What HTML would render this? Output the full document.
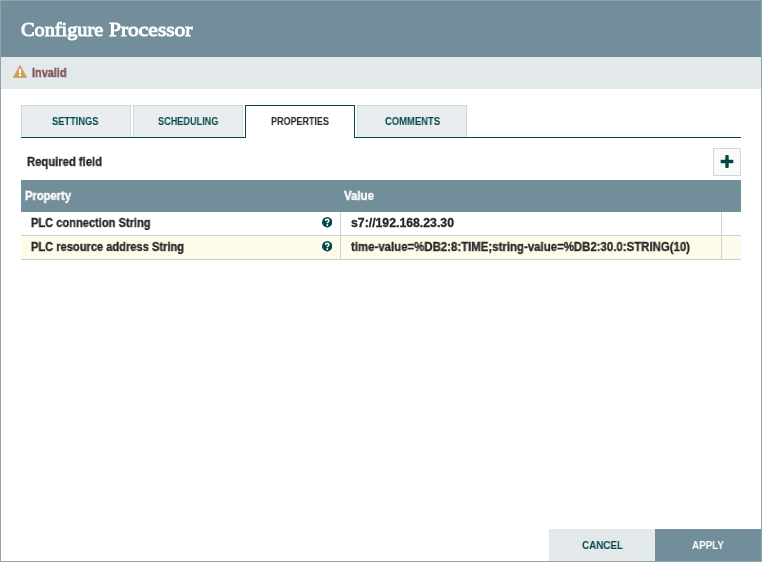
<!DOCTYPE html>
<html><head><meta charset="utf-8">
<style>
*{box-sizing:border-box;margin:0;padding:0}
html,body{width:762px;height:562px;overflow:hidden;background:#90a4ae;font-family:"Liberation Sans",sans-serif;}
#dlg{position:absolute;left:1px;top:1px;width:760px;height:560px;background:#fff;overflow:hidden}
#hdr{position:absolute;left:0;top:0;width:760px;height:56px;background:#728e9b;}
.t{position:absolute;white-space:nowrap;transform-origin:0 50%;display:block;will-change:transform;-webkit-text-stroke:0.3px}
#title,#title2{left:20px;top:17.9px;font-family:"Liberation Serif",serif;font-weight:normal;-webkit-text-stroke:0.9px #fff;font-size:18.5px;color:#fff;line-height:22px;transform:scaleX(1.096)}
#title2{left:108.4px;transform:scaleX(1.161)}
#status{position:absolute;left:0;top:56px;width:760px;height:32px;background:#e3e8eb;}
#status .t{left:30.5px;top:9px;font-size:12px;font-weight:bold;color:#7a4f4f;line-height:14px;transform:scaleX(0.908)}
#warn{position:absolute;left:12px;top:7.8px;}
.tab{position:absolute;top:104px;height:32px;width:110px;background:#e9edef;border:1px solid #ccdadb;border-bottom:none;font-size:10px;font-weight:bold;color:#004849;line-height:32px;}
.tab.sel{background:#fff;border-color:#004849;color:#262626;height:33px;top:104px;}
.tab .t{top:0;-webkit-text-stroke:0}
#tabline{position:absolute;left:20px;top:136px;width:720px;height:1px;background:#004849;}
#req{left:26px;top:154px;font-size:12px;font-weight:bold;color:#262626;line-height:14px;transform:scaleX(0.9375)}
#plus{position:absolute;left:712px;top:147px;width:28px;height:28px;background:#fafafa;border:1px solid #ccdadb;}
#thead{position:absolute;left:20px;top:179px;width:720px;height:32px;background:#728e9b;color:#fff;font-size:12px;font-weight:bold;line-height:32px;}
.row{position:absolute;left:20px;width:720px;height:24px;border-bottom:1px solid #c7d2d7;font-size:12px;font-weight:bold;color:#262626;line-height:23px;}
.row .t{top:0}
.vl{position:absolute;top:0;width:1px;height:23px;background:#c7d2d7}
.btn{position:absolute;top:528px;height:32px;width:106px;font-size:11px;font-weight:bold;line-height:32px;}
.btn .t{top:0;-webkit-text-stroke:0}
</style></head><body>
<div id="dlg">
 <div id="hdr"><div id="title" class="t">Configure</div><div id="title2" class="t">Processor</div></div>
 <div id="status">
  <svg id="warn" width="14" height="13" viewBox="0 0 14 13"><path d="M7 0.5 L13.6 12.4 L0.4 12.4 Z" fill="#cf9f5d" stroke="#cf9f5d" stroke-width="0.8" stroke-linejoin="round"/><rect x="6" y="4" width="2" height="4.3" fill="#fff"/><rect x="6" y="9.2" width="2" height="2" fill="#fff"/></svg>
  <div class="t">Invalid</div>
 </div>
 <div class="tab" style="left:20px"><span class="t" style="left:30.2px;transform:scaleX(0.9295)">SETTINGS</span></div>
 <div class="tab" style="left:132px"><span class="t" style="left:23.7px;transform:scaleX(0.914)">SCHEDULING</span></div>
 <div class="tab" style="left:356px"><span class="t" style="left:26.5px;transform:scaleX(0.943)">COMMENTS</span></div>
 <div id="tabline"></div>
 <div class="tab sel" style="left:244px"><span class="t" style="left:25px;transform:scaleX(0.899)">PROPERTIES</span></div>
 <div id="req" class="t">Required field</div>
 <div id="plus"><svg width="26" height="26" viewBox="0 0 26 26"><rect x="11.3" y="6.1" width="3.4" height="12.8" rx="0.9" fill="#004849"/><rect x="6.6" y="10.8" width="12.8" height="3.4" rx="0.9" fill="#004849"/></svg></div>
 <div id="thead"><span class="t" style="left:4px;top:0.4px;transform:scaleX(0.93)">Property</span><span class="t" style="left:323px;top:0.4px;transform:scaleX(0.955)">Value</span></div>
 <div class="row" style="top:211px;background:#fff"><span class="t" style="left:10px;transform:scaleX(0.924)">PLC connection String</span><span class="t" style="left:330px;transform:scaleX(1.022)">s7://192.168.23.30</span><div class="vl" style="left:319px"></div><div class="vl" style="left:700px"></div>
 <svg class="q" style="position:absolute;left:300.6px;top:5.2px" width="10.4" height="10.4" viewBox="0 0 12 12"><circle cx="6" cy="6" r="6" fill="#004849"/><path d="M4.1 4.7C4.1 3.4 5 2.7 6.1 2.7C7.2 2.7 8 3.4 8 4.4C8 5.6 6.1 5.8 6.1 7.2" fill="none" stroke="#fff" stroke-width="1.7"/><circle cx="6.1" cy="9.25" r="1.05" fill="#fff"/></svg></div>
 <div class="row" style="top:235px;background:#fffbeb"><span class="t" style="left:10px;transform:scaleX(0.925)">PLC resource address String</span><span class="t" style="left:330px;transform:scaleX(0.952)">time-value=%DB2:8:TIME;string-value=%DB2:30.0:STRING(10)</span><div class="vl" style="left:319px"></div><div class="vl" style="left:700px"></div>
 <svg class="q" style="position:absolute;left:300.6px;top:5.2px" width="10.4" height="10.4" viewBox="0 0 12 12"><circle cx="6" cy="6" r="6" fill="#004849"/><path d="M4.1 4.7C4.1 3.4 5 2.7 6.1 2.7C7.2 2.7 8 3.4 8 4.4C8 5.6 6.1 5.8 6.1 7.2" fill="none" stroke="#fff" stroke-width="1.7"/><circle cx="6.1" cy="9.25" r="1.05" fill="#fff"/></svg></div>
 <div class="btn" style="left:548px;background:#e3e8eb;color:#004849"><span class="t" style="left:32.8px;transform:scaleX(0.8945)">CANCEL</span></div>
 <div class="btn" style="left:654px;background:#728e9b;color:#fff"><span class="t" style="left:37px;transform:scaleX(0.8945)">APPLY</span></div>
</div>
</body></html>
